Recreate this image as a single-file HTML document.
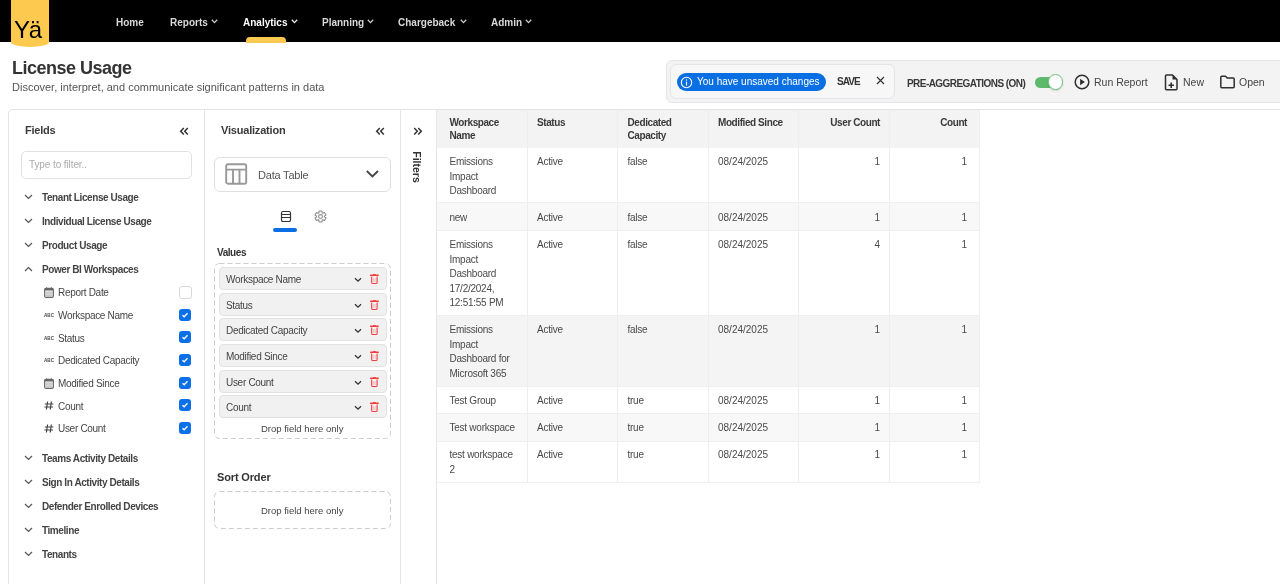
<!DOCTYPE html>
<html><head><meta charset="utf-8">
<style>
*{box-sizing:border-box;margin:0;padding:0}
html,body{width:1280px;height:584px;overflow:hidden;background:#fff;-webkit-font-smoothing:antialiased;font-family:"Liberation Sans",sans-serif;color:#333}
.a{position:absolute;white-space:nowrap}
#nav{position:absolute;left:0;top:0;width:1280px;height:42px;background:#000}
#logo{position:absolute;left:11px;top:0;width:38px;height:47px;background:#fdc94e;border-radius:0 0 19px 19px/0 0 5px 5px}
#logo span{position:absolute;left:3px;top:16px;font-size:24px;line-height:28px;color:#000;letter-spacing:-1.2px}
.ni{position:absolute;top:17px;font-size:10px;line-height:12px;font-weight:bold;color:#d9d9d9}
.ni svg{position:absolute;top:2px}
#ind{position:absolute;left:246px;top:37px;width:40px;height:6px;background:#fdc94e;border-radius:4px 4px 0 0}
</style></head><body><div style="position:absolute;left:0;top:0;width:1280px;height:584px;will-change:transform">
<div id="nav">
  <div id="logo"><span>Yä</span></div>
  <div class="ni" style="left:116px">Home</div>
  <div class="ni" style="left:170px">Reports<svg style="left:41px" width="7" height="5" viewBox="0 0 7 5"><path d="M0.8 0.8L3.5 3.6L6.2 0.8" fill="none" stroke="#ccc" stroke-width="1.3"/></svg></div>
  <div class="ni" style="left:243px;color:#fff">Analytics<svg style="left:48px" width="7" height="5" viewBox="0 0 7 5"><path d="M0.8 0.8L3.5 3.6L6.2 0.8" fill="none" stroke="#eee" stroke-width="1.3"/></svg></div>
  <div class="ni" style="left:322px">Planning<svg style="left:45px" width="7" height="5" viewBox="0 0 7 5"><path d="M0.8 0.8L3.5 3.6L6.2 0.8" fill="none" stroke="#ccc" stroke-width="1.3"/></svg></div>
  <div class="ni" style="left:398px">Chargeback<svg style="left:62px" width="7" height="5" viewBox="0 0 7 5"><path d="M0.8 0.8L3.5 3.6L6.2 0.8" fill="none" stroke="#ccc" stroke-width="1.3"/></svg></div>
  <div class="ni" style="left:491px">Admin<svg style="left:34px" width="7" height="5" viewBox="0 0 7 5"><path d="M0.8 0.8L3.5 3.6L6.2 0.8" fill="none" stroke="#ccc" stroke-width="1.3"/></svg></div>
  <div id="ind"></div>
</div>

<!-- title -->
<div class="a" style="left:12px;top:58px;font-size:18px;line-height:20px;font-weight:bold;letter-spacing:-0.5px;color:#333">License Usage</div>
<div class="a" style="left:12px;top:80px;font-size:11px;line-height:14px;color:#555">Discover, interpret, and communicate significant patterns in data</div>

<!-- TOOLBAR -->
<div class="a" style="left:666px;top:60px;width:640px;height:43px;background:#f3f3f3;border:1px solid #e2e4e7;border-radius:6px"></div>
<div class="a" style="left:670px;top:64px;width:225px;height:35px;background:#f7f7f7;border:1px solid #e4e5e7;border-radius:6px"></div>
<div class="a" style="left:677px;top:73px;width:149px;height:18px;background:#0a6fe3;border-radius:9px"></div>
<svg class="a" style="left:680px;top:76px" width="13" height="13" viewBox="0 0 13 13"><circle cx="6.5" cy="6.5" r="5.2" fill="none" stroke="#fff" stroke-width="1.1"/><rect x="5.95" y="5.6" width="1.1" height="4" fill="#fff"/><circle cx="6.5" cy="4" r="0.7" fill="#fff"/></svg>
<div class="a" style="left:697px;top:76px;font-size:10px;line-height:12px;color:#fff">You have unsaved changes</div>
<div class="a" style="left:837px;top:76px;font-size:10px;line-height:12px;font-weight:bold;letter-spacing:-0.9px;color:#333">SAVE</div>
<svg class="a" style="left:876px;top:76px" width="9" height="9" viewBox="0 0 9 9"><path d="M1 1L8 8M8 1L1 8" stroke="#333" stroke-width="1.2"/></svg>
<div class="a" style="left:907px;top:78px;font-size:10px;line-height:12px;font-weight:bold;letter-spacing:-0.55px;color:#383838">PRE-AGGREGATIONS (ON)</div>
<div class="a" style="left:1035px;top:77px;width:25px;height:11px;background:#5dba6d;border-radius:6px"></div>
<div class="a" style="left:1047.5px;top:74.2px;width:15.4px;height:15.4px;background:#fff;border:1px solid #6cc47a;border-radius:50%;box-shadow:0 1px 2px rgba(0,0,0,0.15)"></div>
<svg class="a" style="left:1074px;top:74px" width="16" height="16" viewBox="0 0 16 16"><circle cx="8" cy="8" r="6.8" fill="none" stroke="#2e2e2e" stroke-width="1.5"/><path d="M6.1 4.8L10.9 8L6.1 11.2Z" fill="#2e2e2e"/></svg>
<div class="a" style="left:1094px;top:76px;font-size:10.5px;line-height:12px;color:#444">Run Report</div>
<svg class="a" style="left:1164px;top:74px" width="15" height="17" viewBox="0 0 15 17"><path d="M2.5 1H8.5L13 5.5V14.8Q13 15.8 12 15.8H2.5Q1.5 15.8 1.5 14.8V2Q1.5 1 2.5 1Z" fill="none" stroke="#2e2e2e" stroke-width="1.5" stroke-linejoin="round"/><path d="M8.5 1V5.5H13Z" fill="#2e2e2e"/><path d="M7.2 8.6V14M4.5 11.3H9.9" stroke="#2e2e2e" stroke-width="1.6"/></svg>
<div class="a" style="left:1183px;top:76px;font-size:10.5px;line-height:12px;color:#444">New</div>
<svg class="a" style="left:1219px;top:75px" width="17" height="14" viewBox="0 0 17 14"><path d="M1.8 2.2Q1.8 1.2 2.8 1.2H6.5L8.2 3H14.2Q15.2 3 15.2 4V11.8Q15.2 12.8 14.2 12.8H2.8Q1.8 12.8 1.8 11.8Z" fill="none" stroke="#2e2e2e" stroke-width="1.5" stroke-linejoin="round"/></svg>
<div class="a" style="left:1239px;top:76px;font-size:10.5px;line-height:12px;color:#444">Open</div>

<!-- PANELS -->
<div class="a" style="left:8px;top:109px;width:1300px;height:500px;border:1px solid #e3e3e3;border-radius:5px"></div>
<div class="a" style="left:204px;top:110px;width:1px;height:480px;background:#e3e3e3"></div>
<div class="a" style="left:400px;top:110px;width:1px;height:480px;background:#e3e3e3"></div>
<div class="a" style="left:436px;top:110px;width:1px;height:480px;background:#e6e6e6"></div>

<!-- FIELDS -->
<div class="a" style="left:25px;top:124px;font-size:11px;line-height:13px;font-weight:bold;letter-spacing:-0.25px;color:#3a3a3a">Fields</div>
<svg class="a" style="left:179px;top:127px" width="10" height="9" viewBox="0 0 10 9"><path d="M4.8 1L1.7 4.2L4.8 7.4M8.8 1L5.7 4.2L8.8 7.4" fill="none" stroke="#333" stroke-width="1.5"/></svg>
<div class="a" style="left:21px;top:151px;width:171px;height:28px;border:1px solid #dfe1e4;border-radius:5px"></div>
<div class="a" style="left:29px;top:159px;font-size:10px;line-height:12px;color:#aaa;letter-spacing:-0.1px">Type to filter..</div>
<style>
.cat{position:absolute;left:42px;font-size:10px;line-height:12px;font-weight:bold;letter-spacing:-0.42px;color:#444}
.cv{position:absolute;left:24px}
.fi{position:absolute;left:58px;font-size:10px;line-height:12px;letter-spacing:-0.3px;color:#454545}
.cb{position:absolute;left:179px;width:12px;height:12px;border-radius:3px;background:#0b6fe8}
.cb svg{position:absolute;left:2px;top:2px}
.cbo{position:absolute;left:179px;width:13px;height:13px;border-radius:3px;border:1px solid #d6d8db;background:#fff}
.ic{position:absolute;left:44px}
</style>
<svg class="cv" style="top:194px" width="9" height="6" viewBox="0 0 9 6"><path d="M1 1L4.5 4.5L8 1" fill="none" stroke="#555" stroke-width="1.2"/></svg>
<div class="cat" style="top:192px">Tenant License Usage</div>
<svg class="cv" style="top:218px" width="9" height="6" viewBox="0 0 9 6"><path d="M1 1L4.5 4.5L8 1" fill="none" stroke="#555" stroke-width="1.2"/></svg>
<div class="cat" style="top:216px">Individual License Usage</div>
<svg class="cv" style="top:242px" width="9" height="6" viewBox="0 0 9 6"><path d="M1 1L4.5 4.5L8 1" fill="none" stroke="#555" stroke-width="1.2"/></svg>
<div class="cat" style="top:240px">Product Usage</div>
<svg class="cv" style="top:266px" width="9" height="6" viewBox="0 0 9 6"><path d="M1 5L4.5 1.5L8 5" fill="none" stroke="#555" stroke-width="1.2"/></svg>
<div class="cat" style="top:264px">Power BI Workspaces</div>

<svg class="ic" style="top:287px" width="10" height="11" viewBox="0 0 10 11"><rect x="0.6" y="1.4" width="8.8" height="9" rx="1.5" fill="#e6e6e6" stroke="#666" stroke-width="1.1"/><rect x="0.6" y="1.4" width="8.8" height="2" fill="#666"/><path d="M1.5 5.2H8.5M1.5 6.8H8.5M1.5 8.4H8.5" stroke="#b5b5b5" stroke-width="0.7"/><path d="M2.6 0.3V2M7.4 0.3V2" stroke="#666" stroke-width="1"/></svg>
<div class="fi" style="top:287px">Report Date</div>
<div class="cbo" style="top:286px"></div>

<svg class="ic" style="top:312px" width="11" height="6" viewBox="0 0 11 6"><text x="0" y="5.2" font-family="Liberation Sans" font-weight="bold" font-size="5.8" fill="#4a4a4a" textLength="10" lengthAdjust="spacingAndGlyphs">ABC</text></svg>
<div class="fi" style="top:310px">Workspace Name</div>
<div class="cb" style="top:309px"><svg width="8" height="8" viewBox="0 0 8 8"><path d="M1.5 4.2L3.2 5.8L6.5 2.3" fill="none" stroke="#fff" stroke-width="1.3"/></svg></div>

<svg class="ic" style="top:335px" width="11" height="6" viewBox="0 0 11 6"><text x="0" y="5.2" font-family="Liberation Sans" font-weight="bold" font-size="5.8" fill="#4a4a4a" textLength="10" lengthAdjust="spacingAndGlyphs">ABC</text></svg>
<div class="fi" style="top:333px">Status</div>
<div class="cb" style="top:331px"><svg width="8" height="8" viewBox="0 0 8 8"><path d="M1.5 4.2L3.2 5.8L6.5 2.3" fill="none" stroke="#fff" stroke-width="1.3"/></svg></div>

<svg class="ic" style="top:357px" width="11" height="6" viewBox="0 0 11 6"><text x="0" y="5.2" font-family="Liberation Sans" font-weight="bold" font-size="5.8" fill="#4a4a4a" textLength="10" lengthAdjust="spacingAndGlyphs">ABC</text></svg>
<div class="fi" style="top:355px">Dedicated Capacity</div>
<div class="cb" style="top:354px"><svg width="8" height="8" viewBox="0 0 8 8"><path d="M1.5 4.2L3.2 5.8L6.5 2.3" fill="none" stroke="#fff" stroke-width="1.3"/></svg></div>

<svg class="ic" style="top:378px" width="10" height="11" viewBox="0 0 10 11"><rect x="0.6" y="1.4" width="8.8" height="9" rx="1.5" fill="#e6e6e6" stroke="#666" stroke-width="1.1"/><rect x="0.6" y="1.4" width="8.8" height="2" fill="#666"/><path d="M1.5 5.2H8.5M1.5 6.8H8.5M1.5 8.4H8.5" stroke="#b5b5b5" stroke-width="0.7"/><path d="M2.6 0.3V2M7.4 0.3V2" stroke="#666" stroke-width="1"/></svg>
<div class="fi" style="top:378px">Modified Since</div>
<div class="cb" style="top:377px"><svg width="8" height="8" viewBox="0 0 8 8"><path d="M1.5 4.2L3.2 5.8L6.5 2.3" fill="none" stroke="#fff" stroke-width="1.3"/></svg></div>

<svg class="ic" style="top:401px" width="10" height="9" viewBox="0 0 10 9"><path d="M3.6 0.5L2.4 8.5M7.4 0.5L6.2 8.5M0.8 3H9.4M0.4 6H9" stroke="#444" stroke-width="1.2"/></svg>
<div class="fi" style="top:401px">Count</div>
<div class="cb" style="top:399px"><svg width="8" height="8" viewBox="0 0 8 8"><path d="M1.5 4.2L3.2 5.8L6.5 2.3" fill="none" stroke="#fff" stroke-width="1.3"/></svg></div>

<svg class="ic" style="top:424px" width="10" height="9" viewBox="0 0 10 9"><path d="M3.6 0.5L2.4 8.5M7.4 0.5L6.2 8.5M0.8 3H9.4M0.4 6H9" stroke="#444" stroke-width="1.2"/></svg>
<div class="fi" style="top:423px">User Count</div>
<div class="cb" style="top:422px"><svg width="8" height="8" viewBox="0 0 8 8"><path d="M1.5 4.2L3.2 5.8L6.5 2.3" fill="none" stroke="#fff" stroke-width="1.3"/></svg></div>

<svg class="cv" style="top:455px" width="9" height="6" viewBox="0 0 9 6"><path d="M1 1L4.5 4.5L8 1" fill="none" stroke="#555" stroke-width="1.2"/></svg>
<div class="cat" style="top:453px">Teams Activity Details</div>
<svg class="cv" style="top:479px" width="9" height="6" viewBox="0 0 9 6"><path d="M1 1L4.5 4.5L8 1" fill="none" stroke="#555" stroke-width="1.2"/></svg>
<div class="cat" style="top:477px">Sign In Activity Details</div>
<svg class="cv" style="top:503px" width="9" height="6" viewBox="0 0 9 6"><path d="M1 1L4.5 4.5L8 1" fill="none" stroke="#555" stroke-width="1.2"/></svg>
<div class="cat" style="top:501px">Defender Enrolled Devices</div>
<svg class="cv" style="top:527px" width="9" height="6" viewBox="0 0 9 6"><path d="M1 1L4.5 4.5L8 1" fill="none" stroke="#555" stroke-width="1.2"/></svg>
<div class="cat" style="top:525px">Timeline</div>
<svg class="cv" style="top:551px" width="9" height="6" viewBox="0 0 9 6"><path d="M1 1L4.5 4.5L8 1" fill="none" stroke="#555" stroke-width="1.2"/></svg>
<div class="cat" style="top:549px">Tenants</div>

<!-- VIS -->
<style>
.vi{position:absolute;left:219px;width:168px;height:23px;background:#f1f1f1;border:1px solid #e2e2e2;border-radius:4px}
.vi span{position:absolute;left:6px;top:6px;font-size:10px;line-height:12px;letter-spacing:-0.3px;color:#444;white-space:nowrap}
.vi .ch{position:absolute;left:134px;top:9px}
.vi .tr{position:absolute;left:150px;top:6px}
</style>
<div class="a" style="left:221px;top:124px;font-size:11px;line-height:13px;font-weight:bold;letter-spacing:-0.2px;color:#3a3a3a">Visualization</div>
<svg class="a" style="left:375px;top:127px" width="10" height="9" viewBox="0 0 10 9"><path d="M4.8 1L1.7 4.2L4.8 7.4M8.8 1L5.7 4.2L8.8 7.4" fill="none" stroke="#333" stroke-width="1.5"/></svg>
<div class="a" style="left:214px;top:157px;width:177px;height:35px;border:1px solid #dedfe1;border-radius:6px"></div>
<svg class="a" style="left:225px;top:163px" width="23" height="22" viewBox="0 0 23 22"><rect x="1.2" y="1.2" width="20" height="19.5" rx="1.8" fill="none" stroke="#999" stroke-width="1.9"/><path d="M1.2 6.6H21.2M8 6.6V20.7M14.5 6.6V20.7" stroke="#999" stroke-width="1.9"/></svg>
<div class="a" style="left:258px;top:169px;font-size:11px;line-height:13px;letter-spacing:-0.2px;color:#555">Data Table</div>
<svg class="a" style="left:365px;top:169px" width="15" height="10" viewBox="0 0 15 10"><path d="M1.8 2L7.4 7.4L13 2" fill="none" stroke="#444" stroke-width="1.8"/></svg>
<svg class="a" style="left:280px;top:210px" width="12" height="13" viewBox="0 0 12 13"><rect x="1.5" y="1.5" width="9" height="10" rx="1.6" fill="none" stroke="#333" stroke-width="1.2"/><path d="M1.3 4.5H10.3M1.3 7.5H10.3" stroke="#333" stroke-width="1.1"/></svg>
<svg class="a" style="left:313.5px;top:210px" width="13" height="13" viewBox="0 0 13 13"><path d="M4.91 2.94 L5.03 0.99 L7.97 0.99 L8.09 2.94 L8.79 3.34 L10.54 2.48 L12.00 5.01 L10.38 6.10 L10.38 6.90 L12.00 7.99 L10.54 10.52 L8.79 9.66 L8.09 10.06 L7.97 12.01 L5.03 12.01 L4.91 10.06 L4.21 9.66 L2.46 10.52 L1.00 7.99 L2.62 6.90 L2.62 6.10 L1.00 5.01 L2.46 2.48 L4.21 3.34Z" fill="none" stroke="#8a8a8a" stroke-width="1.05" stroke-linejoin="round"/><circle cx="6.5" cy="6.5" r="1.9" fill="none" stroke="#8a8a8a" stroke-width="1.05"/></svg>
<div class="a" style="left:273px;top:228px;width:24px;height:4px;background:#0b6fe3;border-radius:2px"></div>
<div class="a" style="left:217px;top:247px;font-size:10px;line-height:12px;font-weight:bold;letter-spacing:-0.45px;color:#333">Values</div>
<svg class="a" style="left:214px;top:263px" width="177" height="176"><rect x="0.5" y="0.5" width="176" height="175" rx="5" fill="none" stroke="#cdcdcd" stroke-dasharray="5 3"/></svg>
<div class="vi" style="top:267px"><span>Workspace Name</span><svg class="ch" width="8" height="6" viewBox="0 0 8 6"><path d="M1 1.2L4 4.2L7 1.2" fill="none" stroke="#333" stroke-width="1.3"/></svg><svg class="tr" width="9" height="11" viewBox="0 0 9 11"><path d="M0.6 1.3H8.2" stroke="#f43c3c" stroke-width="1.5" stroke-linecap="round"/><path d="M3 0.6H5.8" stroke="#f43c3c" stroke-width="1"/><path d="M1.7 2.6V8.4Q1.7 9.5 2.8 9.5H6Q7.1 9.5 7.1 8.4V2.6" fill="none" stroke="#f43c3c" stroke-width="1.1"/><path d="M3.6 4V8M5.2 4V8" stroke="#f9a0a0" stroke-width="0.6"/></svg></div>
<div class="vi" style="top:293px"><span>Status</span><svg class="ch" width="8" height="6" viewBox="0 0 8 6"><path d="M1 1.2L4 4.2L7 1.2" fill="none" stroke="#333" stroke-width="1.3"/></svg><svg class="tr" width="9" height="11" viewBox="0 0 9 11"><path d="M0.6 1.3H8.2" stroke="#f43c3c" stroke-width="1.5" stroke-linecap="round"/><path d="M3 0.6H5.8" stroke="#f43c3c" stroke-width="1"/><path d="M1.7 2.6V8.4Q1.7 9.5 2.8 9.5H6Q7.1 9.5 7.1 8.4V2.6" fill="none" stroke="#f43c3c" stroke-width="1.1"/><path d="M3.6 4V8M5.2 4V8" stroke="#f9a0a0" stroke-width="0.6"/></svg></div>
<div class="vi" style="top:318px"><span>Dedicated Capacity</span><svg class="ch" width="8" height="6" viewBox="0 0 8 6"><path d="M1 1.2L4 4.2L7 1.2" fill="none" stroke="#333" stroke-width="1.3"/></svg><svg class="tr" width="9" height="11" viewBox="0 0 9 11"><path d="M0.6 1.3H8.2" stroke="#f43c3c" stroke-width="1.5" stroke-linecap="round"/><path d="M3 0.6H5.8" stroke="#f43c3c" stroke-width="1"/><path d="M1.7 2.6V8.4Q1.7 9.5 2.8 9.5H6Q7.1 9.5 7.1 8.4V2.6" fill="none" stroke="#f43c3c" stroke-width="1.1"/><path d="M3.6 4V8M5.2 4V8" stroke="#f9a0a0" stroke-width="0.6"/></svg></div>
<div class="vi" style="top:344px"><span>Modified Since</span><svg class="ch" width="8" height="6" viewBox="0 0 8 6"><path d="M1 1.2L4 4.2L7 1.2" fill="none" stroke="#333" stroke-width="1.3"/></svg><svg class="tr" width="9" height="11" viewBox="0 0 9 11"><path d="M0.6 1.3H8.2" stroke="#f43c3c" stroke-width="1.5" stroke-linecap="round"/><path d="M3 0.6H5.8" stroke="#f43c3c" stroke-width="1"/><path d="M1.7 2.6V8.4Q1.7 9.5 2.8 9.5H6Q7.1 9.5 7.1 8.4V2.6" fill="none" stroke="#f43c3c" stroke-width="1.1"/><path d="M3.6 4V8M5.2 4V8" stroke="#f9a0a0" stroke-width="0.6"/></svg></div>
<div class="vi" style="top:370px"><span>User Count</span><svg class="ch" width="8" height="6" viewBox="0 0 8 6"><path d="M1 1.2L4 4.2L7 1.2" fill="none" stroke="#333" stroke-width="1.3"/></svg><svg class="tr" width="9" height="11" viewBox="0 0 9 11"><path d="M0.6 1.3H8.2" stroke="#f43c3c" stroke-width="1.5" stroke-linecap="round"/><path d="M3 0.6H5.8" stroke="#f43c3c" stroke-width="1"/><path d="M1.7 2.6V8.4Q1.7 9.5 2.8 9.5H6Q7.1 9.5 7.1 8.4V2.6" fill="none" stroke="#f43c3c" stroke-width="1.1"/><path d="M3.6 4V8M5.2 4V8" stroke="#f9a0a0" stroke-width="0.6"/></svg></div>
<div class="vi" style="top:395px"><span>Count</span><svg class="ch" width="8" height="6" viewBox="0 0 8 6"><path d="M1 1.2L4 4.2L7 1.2" fill="none" stroke="#333" stroke-width="1.3"/></svg><svg class="tr" width="9" height="11" viewBox="0 0 9 11"><path d="M0.6 1.3H8.2" stroke="#f43c3c" stroke-width="1.5" stroke-linecap="round"/><path d="M3 0.6H5.8" stroke="#f43c3c" stroke-width="1"/><path d="M1.7 2.6V8.4Q1.7 9.5 2.8 9.5H6Q7.1 9.5 7.1 8.4V2.6" fill="none" stroke="#f43c3c" stroke-width="1.1"/><path d="M3.6 4V8M5.2 4V8" stroke="#f9a0a0" stroke-width="0.6"/></svg></div>
<div class="a" style="left:261px;top:423px;font-size:9.5px;line-height:12px;color:#444">Drop field here only</div>
<div class="a" style="left:217px;top:471px;font-size:11px;line-height:13px;font-weight:bold;letter-spacing:-0.15px;color:#333">Sort Order</div>
<svg class="a" style="left:214px;top:491px" width="177" height="38"><rect x="0.5" y="0.5" width="176" height="37" rx="5" fill="none" stroke="#cdcdcd" stroke-dasharray="5 3"/></svg>
<div class="a" style="left:261px;top:505px;font-size:9.5px;line-height:12px;color:#444">Drop field here only</div>

<!-- FILTERS -->
<svg class="a" style="left:413px;top:127px" width="10" height="9" viewBox="0 0 10 9"><path d="M1.2 1L4.3 4.2L1.2 7.4M5.2 1L8.3 4.2L5.2 7.4" fill="none" stroke="#333" stroke-width="1.5"/></svg>
<div class="a" style="left:400px;top:161px;width:33px;height:12px;font-size:10.5px;line-height:12px;font-weight:bold;color:#333;transform:rotate(90deg);transform-origin:50% 50%;text-align:center">Filters</div>

<!-- TABLE -->
<style>.th{position:absolute;font-size:10px;line-height:13px;font-weight:bold;letter-spacing:-0.42px;color:#3a3a3a;white-space:nowrap}.td{position:absolute;font-size:10px;line-height:14.5px;color:#4a4a4a;white-space:nowrap;letter-spacing:-0.25px}.tn{letter-spacing:0}</style>
<div class="a" style="left:437px;top:110px;width:542px;height:38px;background:#f3f3f3"></div>
<div class="a" style="left:437px;top:148px;width:542px;height:55px;background:#fff;border-bottom:1px solid #efefef"></div>
<div class="a" style="left:437px;top:203px;width:542px;height:28px;background:#f8f8f8;border-bottom:1px solid #efefef"></div>
<div class="a" style="left:437px;top:231px;width:542px;height:85px;background:#fff;border-bottom:1px solid #efefef"></div>
<div class="a" style="left:437px;top:316px;width:542px;height:71px;background:#f4f4f4;border-bottom:1px solid #efefef"></div>
<div class="a" style="left:437px;top:387px;width:542px;height:27px;background:#fff;border-bottom:1px solid #efefef"></div>
<div class="a" style="left:437px;top:414px;width:542px;height:28px;background:#f8f8f8;border-bottom:1px solid #efefef"></div>
<div class="a" style="left:437px;top:442px;width:542px;height:41px;background:#fff;border-bottom:1px solid #efefef"></div>
<div class="a" style="left:527px;top:110px;width:1px;height:373px;background:#eeeeee"></div>
<div class="a" style="left:617px;top:110px;width:1px;height:373px;background:#eeeeee"></div>
<div class="a" style="left:708px;top:110px;width:1px;height:373px;background:#eeeeee"></div>
<div class="a" style="left:798px;top:110px;width:1px;height:373px;background:#eeeeee"></div>
<div class="a" style="left:889px;top:110px;width:1px;height:373px;background:#eeeeee"></div>
<div class="a" style="left:979px;top:110px;width:1px;height:373px;background:#eeeeee"></div>
<div class="th" style="left:449.5px;top:115.6px">Workspace<br>Name</div>
<div class="th" style="left:537px;top:115.6px">Status</div>
<div class="th" style="left:627.5px;top:115.6px">Dedicated<br>Capacity</div>
<div class="th" style="left:718px;top:115.6px">Modified Since</div>
<div class="th" style="right:400px;top:115.6px;text-align:right">User Count</div>
<div class="th" style="right:313px;top:115.6px;text-align:right">Count</div>
<div class="td" style="left:449.5px;top:155.3px">Emissions<br>Impact<br>Dashboard</div>
<div class="td" style="left:537px;top:155.3px">Active</div>
<div class="td" style="left:627.5px;top:155.3px">false</div>
<div class="td tn" style="left:718px;top:155.3px">08/24/2025</div>
<div class="td tn" style="right:400px;top:155.3px;text-align:right">1</div>
<div class="td tn" style="right:313px;top:155.3px;text-align:right">1</div>
<div class="td" style="left:449.5px;top:211.3px">new</div>
<div class="td" style="left:537px;top:211.3px">Active</div>
<div class="td" style="left:627.5px;top:211.3px">false</div>
<div class="td tn" style="left:718px;top:211.3px">08/24/2025</div>
<div class="td tn" style="right:400px;top:211.3px;text-align:right">1</div>
<div class="td tn" style="right:313px;top:211.3px;text-align:right">1</div>
<div class="td" style="left:449.5px;top:238.3px">Emissions<br>Impact<br>Dashboard<br>17/2/2024,<br>12:51:55 PM</div>
<div class="td" style="left:537px;top:238.3px">Active</div>
<div class="td" style="left:627.5px;top:238.3px">false</div>
<div class="td tn" style="left:718px;top:238.3px">08/24/2025</div>
<div class="td tn" style="right:400px;top:238.3px;text-align:right">4</div>
<div class="td tn" style="right:313px;top:238.3px;text-align:right">1</div>
<div class="td" style="left:449.5px;top:323.3px">Emissions<br>Impact<br>Dashboard for<br>Microsoft 365</div>
<div class="td" style="left:537px;top:323.3px">Active</div>
<div class="td" style="left:627.5px;top:323.3px">false</div>
<div class="td tn" style="left:718px;top:323.3px">08/24/2025</div>
<div class="td tn" style="right:400px;top:323.3px;text-align:right">1</div>
<div class="td tn" style="right:313px;top:323.3px;text-align:right">1</div>
<div class="td" style="left:449.5px;top:394.3px">Test Group</div>
<div class="td" style="left:537px;top:394.3px">Active</div>
<div class="td" style="left:627.5px;top:394.3px">true</div>
<div class="td tn" style="left:718px;top:394.3px">08/24/2025</div>
<div class="td tn" style="right:400px;top:394.3px;text-align:right">1</div>
<div class="td tn" style="right:313px;top:394.3px;text-align:right">1</div>
<div class="td" style="left:449.5px;top:421.3px">Test workspace</div>
<div class="td" style="left:537px;top:421.3px">Active</div>
<div class="td" style="left:627.5px;top:421.3px">true</div>
<div class="td tn" style="left:718px;top:421.3px">08/24/2025</div>
<div class="td tn" style="right:400px;top:421.3px;text-align:right">1</div>
<div class="td tn" style="right:313px;top:421.3px;text-align:right">1</div>
<div class="td" style="left:449.5px;top:448.3px">test workspace<br>2</div>
<div class="td" style="left:537px;top:448.3px">Active</div>
<div class="td" style="left:627.5px;top:448.3px">true</div>
<div class="td tn" style="left:718px;top:448.3px">08/24/2025</div>
<div class="td tn" style="right:400px;top:448.3px;text-align:right">1</div>
<div class="td tn" style="right:313px;top:448.3px;text-align:right">1</div>
<!-- /TABLE -->
</div></body></html>
